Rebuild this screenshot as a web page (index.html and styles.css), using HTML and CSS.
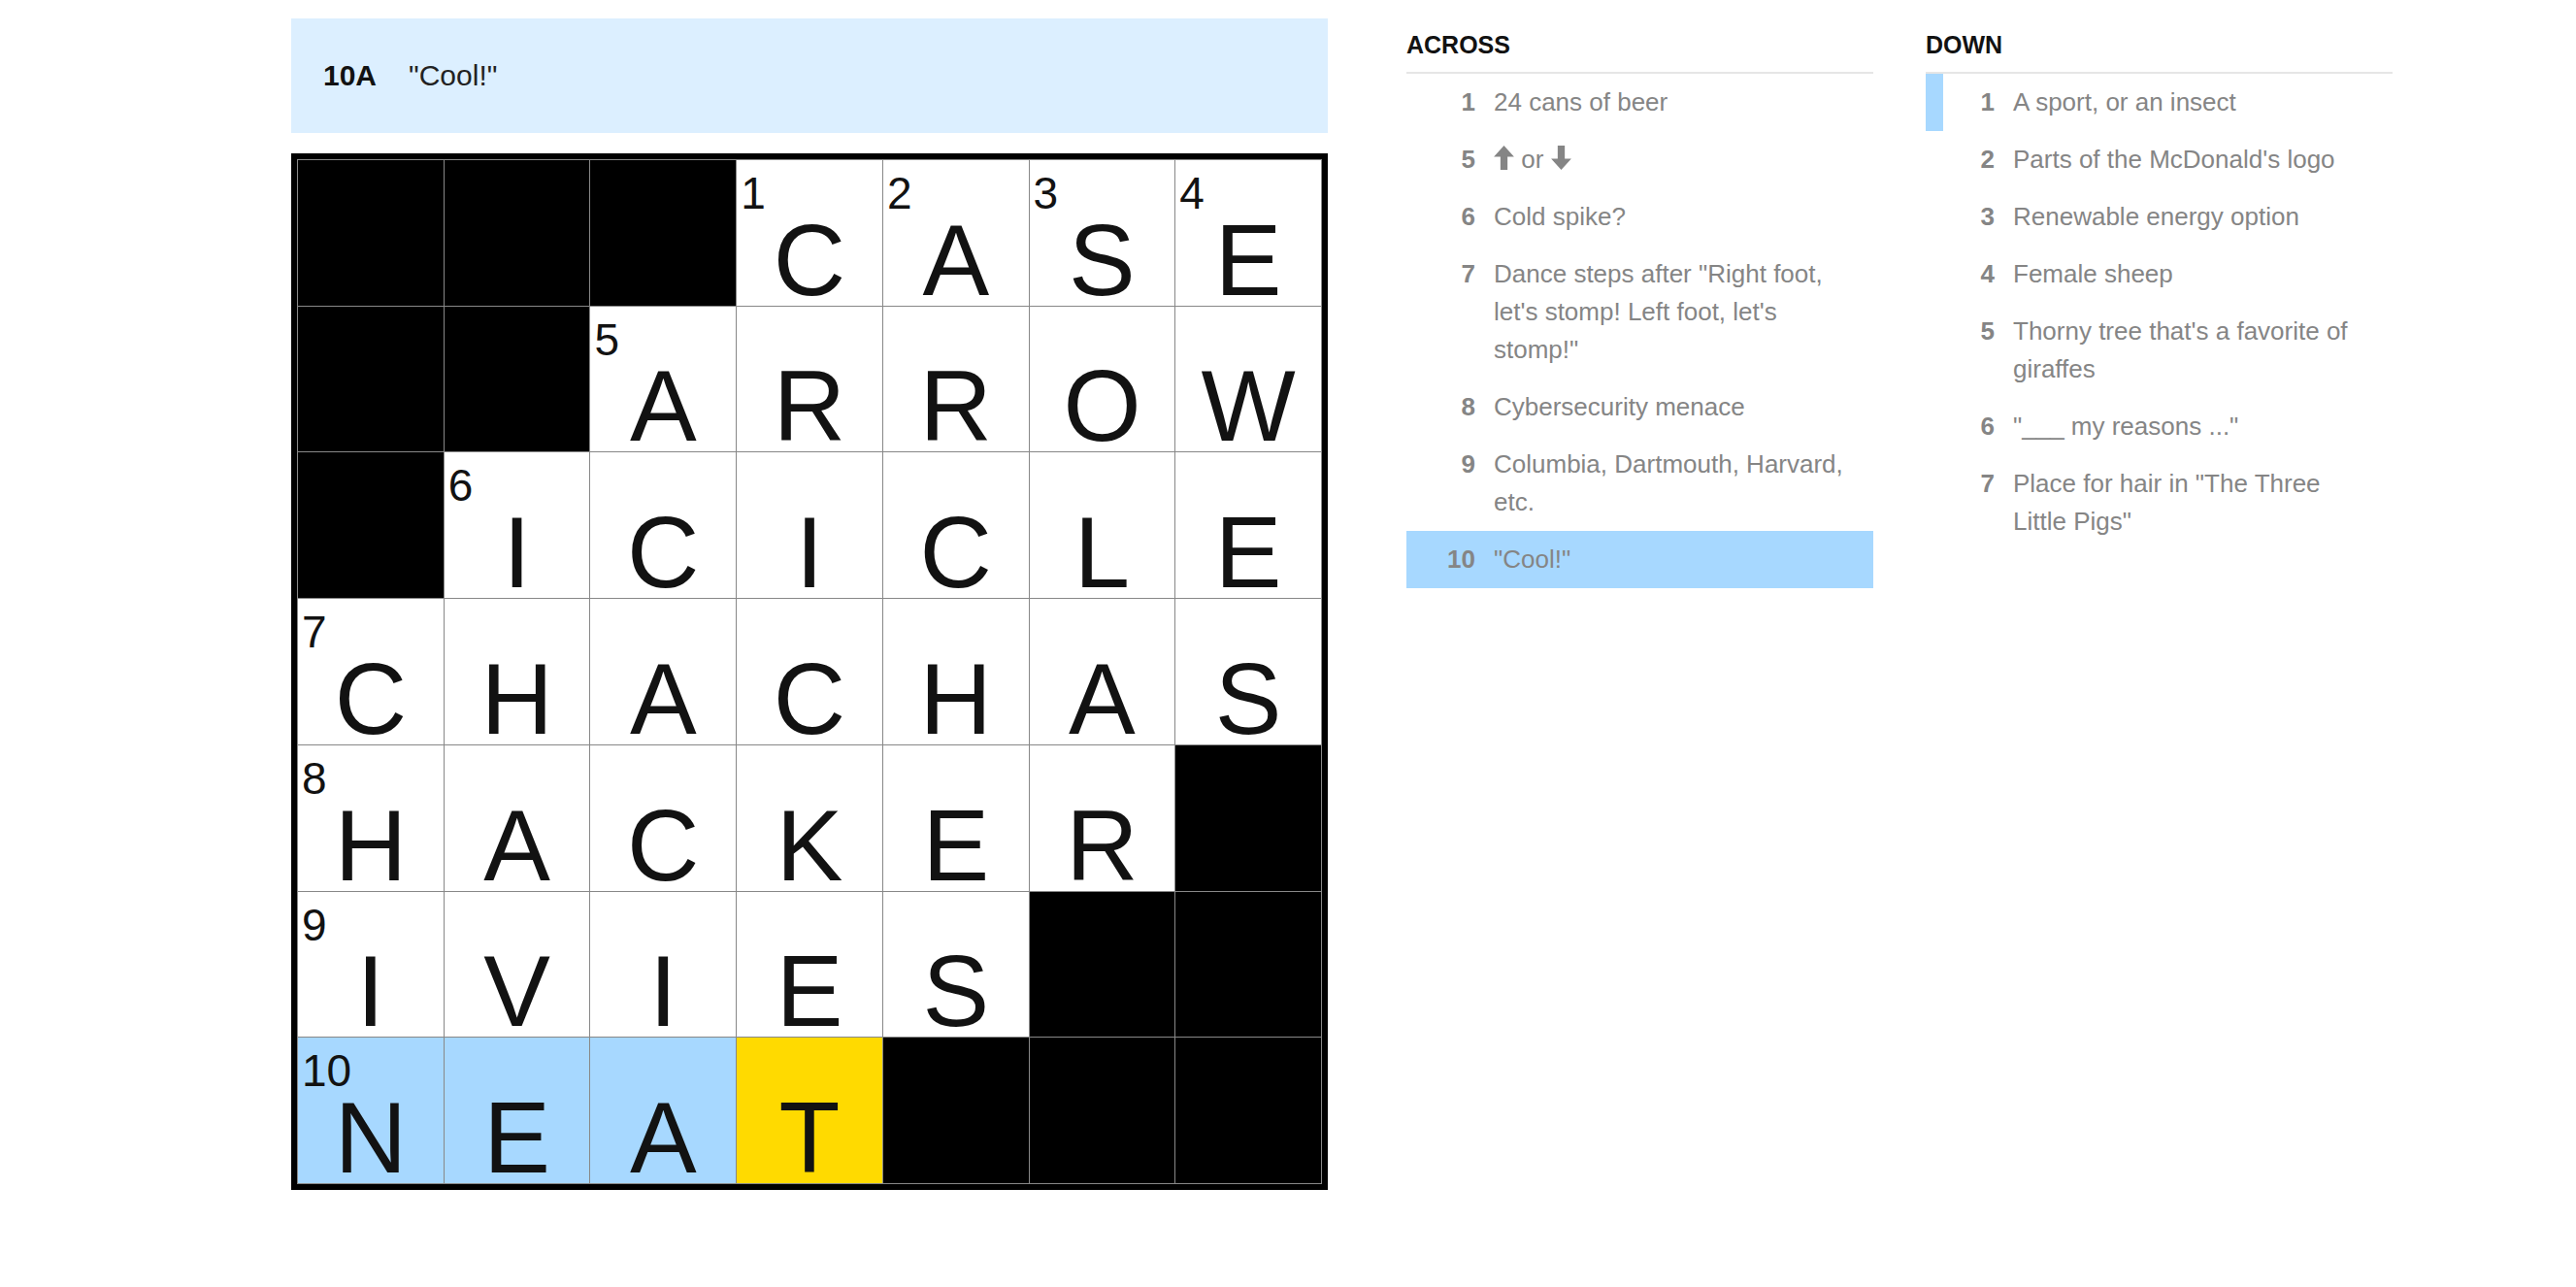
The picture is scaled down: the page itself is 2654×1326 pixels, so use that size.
FILE: index.html
```html
<!DOCTYPE html>
<html lang="en">
<head>
	<meta charset="UTF-8">
	<title>Mini Crossword</title>
	<link rel="stylesheet" href="styles.css">
</head>
<body>
	<div class="layout">
		<div class="board">
			<div class="clue-bar">
				<span class="clue-label">10A</span>
				<span class="clue-text">"Cool!"</span>
			</div>
			<div class="grid">
				<!-- row 1 -->
				<div class="cell block"></div>
				<div class="cell block"></div>
				<div class="cell block"></div>
				<div class="cell"><span class="num">1</span><span class="letter">C</span></div>
				<div class="cell"><span class="num">2</span><span class="letter">A</span></div>
				<div class="cell"><span class="num">3</span><span class="letter">S</span></div>
				<div class="cell"><span class="num">4</span><span class="letter">E</span></div>
				<!-- row 2 -->
				<div class="cell block"></div>
				<div class="cell block"></div>
				<div class="cell"><span class="num">5</span><span class="letter">A</span></div>
				<div class="cell"><span class="letter">R</span></div>
				<div class="cell"><span class="letter">R</span></div>
				<div class="cell"><span class="letter">O</span></div>
				<div class="cell"><span class="letter">W</span></div>
				<!-- row 3 -->
				<div class="cell block"></div>
				<div class="cell"><span class="num">6</span><span class="letter">I</span></div>
				<div class="cell"><span class="letter">C</span></div>
				<div class="cell"><span class="letter">I</span></div>
				<div class="cell"><span class="letter">C</span></div>
				<div class="cell"><span class="letter">L</span></div>
				<div class="cell"><span class="letter">E</span></div>
				<!-- row 4 -->
				<div class="cell"><span class="num">7</span><span class="letter">C</span></div>
				<div class="cell"><span class="letter">H</span></div>
				<div class="cell"><span class="letter">A</span></div>
				<div class="cell"><span class="letter">C</span></div>
				<div class="cell"><span class="letter">H</span></div>
				<div class="cell"><span class="letter">A</span></div>
				<div class="cell"><span class="letter">S</span></div>
				<!-- row 5 -->
				<div class="cell"><span class="num">8</span><span class="letter">H</span></div>
				<div class="cell"><span class="letter">A</span></div>
				<div class="cell"><span class="letter">C</span></div>
				<div class="cell"><span class="letter">K</span></div>
				<div class="cell"><span class="letter">E</span></div>
				<div class="cell"><span class="letter">R</span></div>
				<div class="cell block"></div>
				<!-- row 6 -->
				<div class="cell"><span class="num">9</span><span class="letter">I</span></div>
				<div class="cell"><span class="letter">V</span></div>
				<div class="cell"><span class="letter">I</span></div>
				<div class="cell"><span class="letter">E</span></div>
				<div class="cell"><span class="letter">S</span></div>
				<div class="cell block"></div>
				<div class="cell block"></div>
				<!-- row 7 -->
				<div class="cell word"><span class="num">10</span><span class="letter">N</span></div>
				<div class="cell word"><span class="letter">E</span></div>
				<div class="cell word"><span class="letter">A</span></div>
				<div class="cell selected"><span class="letter">T</span></div>
				<div class="cell block"></div>
				<div class="cell block"></div>
				<div class="cell block"></div>
			</div>
		</div>

		<div class="lists">
			<div class="clue-list">
				<h3>ACROSS</h3>
				<ol>
					<li><span class="n">1</span><span class="t">24 cans of beer</span></li>
					<li><span class="n">5</span><span class="t"><svg class="arrow" viewBox="0 0 20 24"><path d="M10 0 L20 11 H13.5 V24 H6.5 V11 H0 Z"/></svg> or <svg class="arrow" viewBox="0 0 20 24"><path d="M10 24 L20 13 H13.5 V0 H6.5 V13 H0 Z"/></svg></span></li>
					<li><span class="n">6</span><span class="t">Cold spike?</span></li>
					<li><span class="n">7</span><span class="t">Dance steps after "Right foot, let's stomp! Left foot, let's stomp!"</span></li>
					<li><span class="n">8</span><span class="t">Cybersecurity menace</span></li>
					<li><span class="n">9</span><span class="t">Columbia, Dartmouth, Harvard, etc.</span></li>
					<li class="active"><span class="n">10</span><span class="t">"Cool!"</span></li>
				</ol>
			</div>
			<div class="clue-list">
				<h3>DOWN</h3>
				<ol>
					<li class="crossing"><span class="n">1</span><span class="t">A sport, or an insect</span></li>
					<li><span class="n">2</span><span class="t">Parts of the McDonald's logo</span></li>
					<li><span class="n">3</span><span class="t">Renewable energy option</span></li>
					<li><span class="n">4</span><span class="t">Female sheep</span></li>
					<li><span class="n">5</span><span class="t">Thorny tree that's a favorite of giraffes</span></li>
					<li><span class="n">6</span><span class="t">"___ my reasons ..."</span></li>
					<li><span class="n">7</span><span class="t">Place for hair in "The Three Little Pigs"</span></li>
				</ol>
			</div>
		</div>
	</div>
</body>
</html>
```

FILE: styles.css
```css
body {
	margin: 0;
	font-family: "Liberation Sans", Arial, sans-serif;
	background-color: #fff;
	color: #121212;
}
.layout {
	display: flex;
	align-items: flex-start;
	gap: 81px;
	padding: 19px 0 0 300px;
}
.board {
	width: 1068px;
}

/* current clue strip */
.clue-bar {
	height: 118px;
	box-sizing: border-box;
	padding-left: 33px;
	background-color: #dcefff;
	display: flex;
	align-items: center;
	font-size: 30px;
}
.clue-label {
	font-weight: 700;
	margin-right: 33px;
}
.clue-text {
	color: #222;
}

/* puzzle grid */
.grid {
	margin-top: 21px;
	width: 1068px;
	box-sizing: border-box;
	border: 6px solid #000;
	padding: 1px;
	background-color: #888;
	display: grid;
	grid-template-columns: repeat(7, 1fr);
	gap: 1px;
}
.cell {
	aspect-ratio: 1;
	background-color: #fff;
	position: relative;
	display: flex;
	justify-content: center;
	align-items: flex-end;
}
.cell.block {
	background-color: #000;
}
.cell.word {
	background-color: #a7d8ff;
}
.cell.selected {
	background-color: #ffda00;
}
.num {
	position: absolute;
	top: 11px;
	left: 4px;
	font-size: 46px;
	line-height: 1;
}
.letter {
	font-size: 103px;
	line-height: 1;
	margin-bottom: -5px;
}

/* clue lists */
.lists {
	display: flex;
	gap: 54px;
	padding-top: 12px;
}
.clue-list {
	width: 481px;
}
.clue-list h3 {
	margin: 0;
	font-size: 25px;
	line-height: 30px;
	font-weight: 700;
	padding-bottom: 13px;
	border-bottom: 2px solid #e6e6e6;
}
.clue-list ol {
	list-style: none;
	margin: 0;
	padding: 0;
}
.clue-list li {
	display: flex;
	padding: 10px 21px 10px 0;
	border-left: 18px solid transparent;
	font-size: 26px;
	line-height: 39px;
	color: #858585;
}
.clue-list li.active {
	background-color: #a7d8ff;
}
.clue-list li.crossing {
	border-left-color: #a7d8ff;
}
.clue-list .n {
	flex: none;
	width: 53px;
	margin-right: 19px;
	text-align: right;
	font-weight: 700;
}
.arrow {
	width: 21px;
	height: 25px;
	fill: currentColor;
	vertical-align: -2px;
}
```
